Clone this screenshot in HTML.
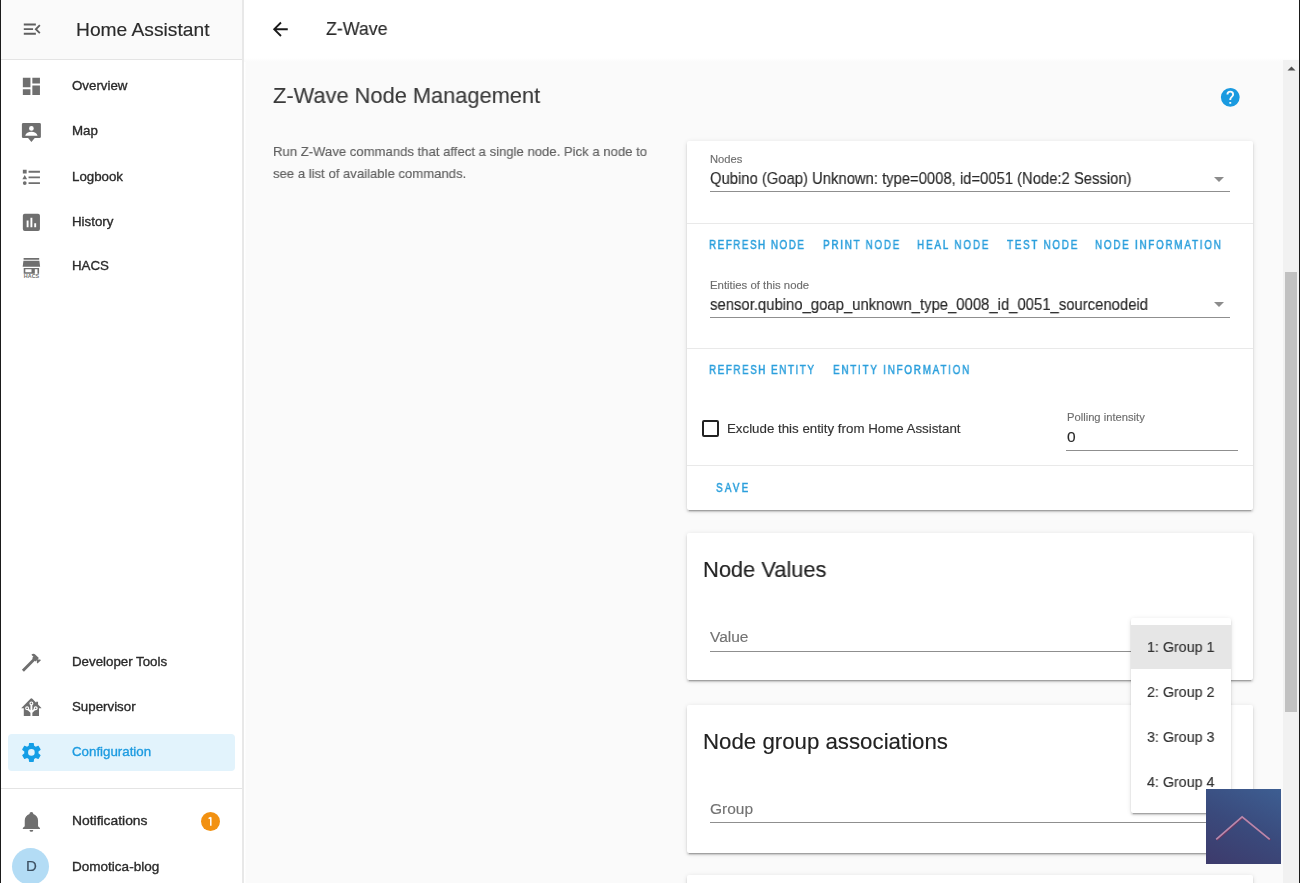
<!DOCTYPE html>
<html><head><meta charset="utf-8">
<style>
*{box-sizing:border-box;margin:0;padding:0}
html,body{width:1300px;height:883px;overflow:hidden;background:#fafafa;font-family:"Liberation Sans",sans-serif;color:#212121}
.abs{position:absolute}
.t{position:absolute;white-space:nowrap;line-height:1;transform-origin:0 0;will-change:transform}
.card{position:absolute;background:#fff;border-radius:2px;box-shadow:0 2px 2px 0 rgba(0,0,0,.14),0 1px 5px 0 rgba(0,0,0,.12),0 3px 1px -2px rgba(0,0,0,.2)}
.med{-webkit-text-stroke:0.35px currentColor}
.bt{-webkit-text-stroke:0.5px currentColor}
.t{-webkit-text-stroke:0.15px currentColor}
.t.med{-webkit-text-stroke:0.35px currentColor}
.t.bt{-webkit-text-stroke:0.5px currentColor}
.ul{position:absolute;height:1px;background:#8f8f8f}
.sep{position:absolute;height:1px;background:#e9e9e9}
</style></head><body>

<div class="abs" style="left:0;top:0;width:242px;height:883px;background:#fff"></div>
<div class="abs" style="left:0;top:0;width:242px;height:59px;background:#fafafa"></div>
<div class="abs" style="left:0;top:59px;width:242px;height:1px;background:#e4e4e4"></div>
<div class="abs" style="left:242px;top:0;width:2px;height:883px;background:#e8e8e8"></div>
<svg class="abs" style="left:20.9px;top:18.0px" width="22.3" height="22.3" viewBox="0 0 24 24"><path fill="#5f5f5f" d="M21,15.61L19.59,17L14.58,12L19.59,7L21,8.39L17.44,12L21,15.61M3,6H16V8H3V6M3,13V11H13V13H3M3,18V16H16V18H3Z"/></svg>
<div class="t" style="left:76.3px;top:19.76px;font-size:19px;color:#2a2a2a;transform:scaleX(1.0113);">Home Assistant</div>
<svg class="abs" style="left:19.85px;top:75.3px" width="22.8" height="22.8" viewBox="0 0 24 24"><path fill="#6f6f6f" d="M13,3V9H21V3M13,21H21V11H13M3,21H11V15H3M3,13H11V3H3V13Z"/></svg>
<div class="t med" style="left:71.8px;top:79.07px;font-size:13.3px;color:#2a2a2a;">Overview</div>
<svg class="abs" style="left:19.85px;top:120.5px" width="22.8" height="22.8" viewBox="0 0 24 24"><path fill="#6f6f6f" d="M3.5,2H20.5A1.5,1.5 0 0,1 22,3.5V16.5A1.5,1.5 0 0,1 20.5,18H15.5L12,22L8.5,18H3.5A1.5,1.5 0 0,1 2,16.5V3.5A1.5,1.5 0 0,1 3.5,2ZM12,5.3A2.5,2.5 0 0,0 9.5,7.8A2.5,2.5 0 0,0 12,10.3A2.5,2.5 0 0,0 14.5,7.8A2.5,2.5 0 0,0 12,5.3ZM5.5,15.4H18.5C18,12.6 15,11.2 12,11.2C9,11.2 6,12.6 5.5,15.4Z"/></svg>
<div class="t med" style="left:71.8px;top:124.27px;font-size:13.3px;color:#2a2a2a;">Map</div>
<svg class="abs" style="left:19.85px;top:166.20000000000002px" width="22.8" height="22.8" viewBox="0 0 24 24"><path fill="#6f6f6f" d="M5,9.5L7.5,14H2.5L5,9.5M3,4H7V8H3V4M5,20A2,2 0 0,0 7,18A2,2 0 0,0 5,16A2,2 0 0,0 3,18A2,2 0 0,0 5,20M9,5V7H21V5H9M9,19H21V17H9V19M9,13H21V11H9V13Z"/></svg>
<div class="t med" style="left:71.8px;top:169.97px;font-size:13.3px;color:#2a2a2a;">Logbook</div>
<svg class="abs" style="left:19.85px;top:210.9px" width="22.8" height="22.8" viewBox="0 0 24 24"><path fill="#6f6f6f" d="M17,17H15V13H17M13,17H11V7H13M9,17H7V10H9M19,3H5C3.89,3 3,3.89 3,5V19A2,2 0 0,0 5,21H19A2,2 0 0,0 21,19V5C21,3.89 20.1,3 19,3Z"/></svg>
<div class="t med" style="left:71.8px;top:214.67px;font-size:13.3px;color:#2a2a2a;">History</div>
<svg class="abs" style="left:19.85px;top:255.99999999999997px" width="22.8" height="22.8" viewBox="0 0 24 24"><path fill="#6f6f6f" d="M3.8,2H20.2V3.9H3.8ZM3.6,4.9H20.4L21.2,11.2H2.8ZM3.9,12.6H20.1V18.6H3.9ZM5.6,13.9V17.1H12.1V13.9ZM15.6,13.9V18.6H18.4V13.9Z"/><text x="4" y="23.6" font-size="5.2" textLength="16.2" lengthAdjust="spacingAndGlyphs" font-family="Liberation Sans" font-weight="bold" fill="#6f6f6f">HACS</text></svg>
<div class="t med" style="left:71.8px;top:259.07px;font-size:13.3px;color:#2a2a2a;">HACS</div>
<svg class="abs" style="left:19.85px;top:650.7px" width="22.8" height="22.8" viewBox="0 0 24 24"><path fill="#6f6f6f" d="M2 19.63L13.43 8.2L12.72 7.5L14.14 6.07L12 3.89C13.2 2.7 15.09 2.7 16.27 3.89L19.87 7.5L18.45 8.91H21.29L22 9.62L18.45 13.21L17.74 12.5V9.62L16.27 11.04L15.56 10.33L4.13 21.76L2 19.63Z"/></svg>
<div class="t med" style="left:71.8px;top:654.67px;font-size:13.3px;color:#2a2a2a;">Developer Tools</div>
<svg class="abs" style="left:19.85px;top:695.7px" width="22.8" height="22.8" viewBox="0 0 24 24"><path fill="#6f6f6f" d="M21.8,13H20V21H13V17.67L15.79,14.88L16.5,15C17.66,15 18.6,14.06 18.6,12.9C18.6,11.74 17.66,10.8 16.5,10.8A2.1,2.1 0 0,0 14.4,12.9L14.5,13.61L13,15.13V9.65C13.66,9.29 14.1,8.6 14.1,7.8A2.1,2.1 0 0,0 12,5.7A2.1,2.1 0 0,0 9.9,7.8C9.9,8.6 10.34,9.29 11,9.65V15.13L9.5,13.61L9.6,12.9A2.1,2.1 0 0,0 7.5,10.8A2.1,2.1 0 0,0 5.4,12.9A2.1,2.1 0 0,0 7.5,15L8.21,14.88L11,17.67V21H4V13H2.25C1.83,13 1.42,13 1.42,12.79C1.43,12.57 1.85,12.15 2.28,11.72L11,3C11.33,2.67 11.67,2.33 12,2.33C12.33,2.33 12.67,2.67 13,3L17,7V6H19V9L21.78,11.78C22.18,12.18 22.59,12.59 22.6,12.8C22.6,13 22.2,13 21.8,13M7.5,12A0.9,0.9 0 0,1 8.4,12.9A0.9,0.9 0 0,1 7.5,13.8A0.9,0.9 0 0,1 6.6,12.9A0.9,0.9 0 0,1 7.5,12M16.5,12C17,12 17.4,12.4 17.4,12.9C17.4,13.4 17,13.8 16.5,13.8C16,13.8 15.6,13.4 15.6,12.9C15.6,12.4 16,12 16.5,12M12,6.9C12.5,6.9 12.9,7.3 12.9,7.8C12.9,8.3 12.5,8.7 12,8.7C11.5,8.7 11.1,8.3 11.1,7.8C11.1,7.3 11.5,6.9 12,6.9Z"/></svg>
<div class="t med" style="left:71.8px;top:699.67px;font-size:13.3px;color:#2a2a2a;">Supervisor</div>
<div class="abs" style="left:8px;top:734px;width:227px;height:37px;background:#e2f3fc;border-radius:4px"></div>
<svg class="abs" style="left:19.85px;top:741.3px" width="22.8" height="22.8" viewBox="0 0 24 24"><path fill="#149ee6" d="M12,15.5A3.5,3.5 0 0,1 8.5,12A3.5,3.5 0 0,1 12,8.5A3.5,3.5 0 0,1 15.5,12A3.5,3.5 0 0,1 12,15.5M19.43,12.97C19.47,12.65 19.5,12.33 19.5,12C19.5,11.67 19.47,11.34 19.43,11L21.54,9.37C21.73,9.22 21.78,8.95 21.66,8.73L19.66,5.27C19.54,5.05 19.27,4.96 19.05,5.05L16.56,6.05C16.04,5.66 15.5,5.32 14.87,5.07L14.5,2.42C14.46,2.18 14.25,2 14,2H10C9.75,2 9.54,2.18 9.5,2.42L9.13,5.07C8.5,5.32 7.96,5.66 7.44,6.05L4.95,5.05C4.73,4.96 4.46,5.05 4.34,5.27L2.34,8.73C2.21,8.95 2.27,9.22 2.46,9.37L4.57,11C4.53,11.34 4.5,11.67 4.5,12C4.5,12.33 4.53,12.65 4.57,12.97L2.46,14.63C2.27,14.78 2.21,15.05 2.34,15.27L4.34,18.73C4.46,18.95 4.73,19.03 4.95,18.95L7.44,17.94C7.96,18.34 8.5,18.68 9.13,18.93L9.5,21.58C9.54,21.82 9.75,22 10,22H14C14.25,22 14.46,21.82 14.5,21.58L14.87,18.93C15.5,18.67 16.04,18.34 16.56,17.94L19.05,18.95C19.27,19.03 19.54,18.95 19.66,18.73L21.66,15.27C21.78,15.05 21.73,14.78 21.54,14.63L19.43,12.97Z"/></svg>
<div class="t med" style="left:71.8px;top:744.87px;font-size:13.3px;color:#1d9be0;">Configuration</div>
<div class="abs" style="left:0;top:788px;width:242px;height:1px;background:#e4e4e4"></div>
<svg class="abs" style="left:19.85px;top:810.3px" width="22.8" height="22.8" viewBox="0 0 24 24"><path fill="#6f6f6f" d="M21,19V20H3V19L5,17V11C5,7.9 7.03,5.17 10,4.29C10,4.19 10,4.1 10,4A2,2 0 0,1 12,2A2,2 0 0,1 14,4C14,4.1 14,4.19 14,4.29C16.97,5.17 19,7.9 19,11V17L21,19M14,21A2,2 0 0,1 12,23A2,2 0 0,1 10,21"/></svg>
<div class="t med" style="left:71.8px;top:814.37px;font-size:13.3px;color:#2a2a2a;transform:scaleX(1.0420);">Notifications</div>
<div class="abs" style="left:200.5px;top:812px;width:19px;height:19px;border-radius:50%;background:#f29111"></div>
<svg class="abs" style="left:200px;top:811px" width="20" height="20" viewBox="0 0 20 20"><path d="M10.8,6.2V14.8M10.8,6.4L8.6,7.6" stroke="#fff" stroke-width="1.5" fill="none"/></svg>
<div class="abs" style="left:12.3px;top:847.5px;width:37px;height:37px;border-radius:50%;background:#b3dcf5"></div>
<div class="t" style="left:25.5px;top:857.60px;font-size:15px;color:#3c4f60;">D</div>
<div class="t med" style="left:71.8px;top:859.67px;font-size:13.3px;color:#2a2a2a;transform:scaleX(1.0176);">Domotica-blog</div>
<div class="abs" style="left:0;top:0;width:1px;height:883px;background:#1b1b1b"></div>
<div class="abs" style="left:244px;top:0;width:1055px;height:883px;background:linear-gradient(90deg,#fff 0,#fff 1px,#fafafa 2px)"></div>
<div class="abs" style="left:244px;top:0;width:1055px;height:62px;background:linear-gradient(180deg,#fff 0,#fff 58px,#fcfcfc 60px,#fafafa 62px)"></div>
<svg class="abs" style="left:268.9px;top:17.6px" width="22.5" height="22.5" viewBox="0 0 24 24"><path fill="#1a1a1a" d="M20,11V13H8L13.5,18.5L12.08,19.92L4.16,12L12.08,4.08L13.5,5.5L8,11H20Z"/></svg>
<div class="t" style="left:325.8px;top:20.44px;font-size:18.5px;color:#2a2a2a;transform:scaleX(0.9609);">Z-Wave</div>
<div class="t" style="left:272.5px;top:85.48px;font-size:22px;color:#3a3a3a;transform:scaleX(0.9918);">Z-Wave Node Management</div>
<svg class="abs" style="left:1218.9px;top:85.8px" width="22.56" height="22.56" viewBox="0 0 24 24"><path fill="#1a9ae0" d="M15.07,11.25L14.17,12.17C13.45,12.89 13,13.5 13,15H11V14.5C11,13.39 11.45,12.39 12.17,11.66L13.41,10.41C13.78,10.05 14,9.55 14,9C14,7.89 13.1,7 12,7A2,2 0 0,0 10,9H8A4,4 0 0,1 12,5A4,4 0 0,1 16,9C16,9.88 15.64,10.67 15.07,11.25M13,19H11V17H13M12,2A10,10 0 0,0 2,12A10,10 0 0,0 12,22A10,10 0 0,0 22,12C22,6.47 17.5,2 12,2Z"/></svg>
<div class="t" style="left:272.5px;top:141.3px;font-size:13.6px;line-height:22.2px;color:#606060;width:420px;white-space:normal;transform:scaleX(0.965)">Run Z-Wave commands that affect a single node. Pick a node to<br>see a list of available commands.</div>
<div class="card" style="left:687px;top:141px;width:566px;height:369px"></div>
<div class="t" style="left:710.2px;top:154.41px;font-size:11.2px;color:#6e6e6e;">Nodes</div>
<div class="t" style="left:710px;top:171.24px;font-size:16px;color:#2a2a2a;transform:scaleX(0.9256);">Qubino (Goap) Unknown: type=0008, id=0051 (Node:2 Session)</div>
<svg class="abs" style="left:1207px;top:167px" width="24" height="24" viewBox="0 0 24 24"><path fill="#8c8c8c" d="M7,10L12,15L17,10H7Z"/></svg>
<div class="ul" style="left:710px;top:191px;width:520px"></div>
<div class="sep" style="left:687px;top:222.5px;width:566px"></div>
<div class="t bt" style="left:709.3000000000001px;top:238.88px;font-size:12.0px;letter-spacing:1.86px;color:#2a9fdc;transform:scaleX(0.82)">REFRESH NODE</div>
<div class="t bt" style="left:822.8000000000001px;top:238.88px;font-size:12.0px;letter-spacing:2.14px;color:#2a9fdc;transform:scaleX(0.82)">PRINT NODE</div>
<div class="t bt" style="left:916.8000000000001px;top:238.88px;font-size:12.0px;letter-spacing:2.27px;color:#2a9fdc;transform:scaleX(0.82)">HEAL NODE</div>
<div class="t bt" style="left:1006.5000000000001px;top:238.88px;font-size:12.0px;letter-spacing:2.15px;color:#2a9fdc;transform:scaleX(0.82)">TEST NODE</div>
<div class="t bt" style="left:1094.8px;top:238.88px;font-size:12.0px;letter-spacing:2.15px;color:#2a9fdc;transform:scaleX(0.82)">NODE INFORMATION</div>
<div class="t" style="left:710.2px;top:279.61px;font-size:11.2px;color:#6e6e6e;transform:scaleX(1.0154);">Entities of this node</div>
<div class="t" style="left:710px;top:297.24px;font-size:16px;color:#2a2a2a;transform:scaleX(0.9290);">sensor.qubino_goap_unknown_type_0008_id_0051_sourcenodeid</div>
<svg class="abs" style="left:1207px;top:292px" width="24" height="24" viewBox="0 0 24 24"><path fill="#8c8c8c" d="M7,10L12,15L17,10H7Z"/></svg>
<div class="ul" style="left:710px;top:316.5px;width:520px"></div>
<div class="sep" style="left:687px;top:348px;width:566px"></div>
<div class="t bt" style="left:709.3000000000001px;top:364.28px;font-size:12.0px;letter-spacing:1.90px;color:#2a9fdc;transform:scaleX(0.82)">REFRESH ENTITY</div>
<div class="t bt" style="left:833.1px;top:364.28px;font-size:12.0px;letter-spacing:2.19px;color:#2a9fdc;transform:scaleX(0.82)">ENTITY INFORMATION</div>
<div class="abs" style="left:701.8px;top:419.8px;width:17px;height:17px;border:2px solid #222;border-radius:2px"></div>
<div class="t" style="left:727.3px;top:421.87px;font-size:13.3px;color:#333;">Exclude this entity from Home Assistant</div>
<div class="t" style="left:1066.6px;top:411.71px;font-size:11.2px;color:#6e6e6e;">Polling intensity</div>
<div class="t" style="left:1066.5px;top:429.02px;font-size:15.5px;color:#2a2a2a;">0</div>
<div class="ul" style="left:1066px;top:449.5px;width:172px"></div>
<div class="sep" style="left:687px;top:465px;width:566px"></div>
<div class="t bt" style="left:715.7px;top:482.48px;font-size:12.0px;letter-spacing:2.73px;color:#2a9fdc;transform:scaleX(0.82)">SAVE</div>
<div class="card" style="left:687px;top:532.5px;width:566px;height:147.8px"></div>
<div class="t" style="left:702.8px;top:558.98px;font-size:22px;color:#222;transform:scaleX(0.9936);">Node Values</div>
<div class="t" style="left:709.8px;top:629.02px;font-size:15.5px;color:#737373;">Value</div>
<div class="ul" style="left:710px;top:650.5px;width:520px"></div>
<div class="card" style="left:687px;top:704.5px;width:566px;height:148.3px"></div>
<div class="t" style="left:702.8px;top:731.08px;font-size:22px;color:#222;transform:scaleX(1.0116);">Node group associations</div>
<div class="t" style="left:709.8px;top:801.02px;font-size:15.5px;color:#737373;">Group</div>
<div class="ul" style="left:710px;top:822px;width:520px"></div>
<div class="card" style="left:687px;top:874.5px;width:566px;height:60px"></div>
<div class="card" style="left:1131px;top:617.5px;width:99.5px;height:195.5px;border-radius:2px"></div>
<div class="abs" style="left:1131px;top:625px;width:99.5px;height:44px;background:#e6e6e6"></div>
<div class="t" style="left:1147.3px;top:638.80px;font-size:15px;color:#333;transform:scaleX(0.9520);">1: Group 1</div>
<div class="t" style="left:1147.3px;top:684.00px;font-size:15px;color:#333;transform:scaleX(0.9520);">2: Group 2</div>
<div class="t" style="left:1147.3px;top:729.20px;font-size:15px;color:#333;transform:scaleX(0.9520);">3: Group 3</div>
<div class="t" style="left:1147.3px;top:774.40px;font-size:15px;color:#333;transform:scaleX(0.9520);">4: Group 4</div>
<div class="abs" style="left:1283px;top:60px;width:16px;height:823px;background:#f1f1f1"></div>
<div class="abs" style="left:1285px;top:272px;width:12px;height:440px;background:#c1c1c1"></div>
<svg class="abs" style="left:1287px;top:64px" width="9" height="8" viewBox="0 0 9 8"><path fill="#505050" d="M0.5,6.5L4.5,2.5L8.5,6.5Z"/></svg>
<div class="abs" style="left:1299px;top:0;width:1px;height:883px;background:#1b1b1b"></div>
<div class="abs" style="left:1206px;top:789px;width:75px;height:75px;background:linear-gradient(205deg,#3d5e92 0%,#3a4a7c 50%,#3d3a6b 100%)"></div>
<svg class="abs" style="left:1206px;top:789px" width="75" height="75" viewBox="0 0 75 75"><path d="M10.9,51.2L36.9,28.6L64.5,51.2" fill="none" stroke="#7a3058" stroke-width="1.6" opacity="0.75"/><path d="M10.2,50.4L36.1,27.8L63.7,50.4" fill="none" stroke="#b888ac" stroke-width="1.7"/></svg>
</body></html>
